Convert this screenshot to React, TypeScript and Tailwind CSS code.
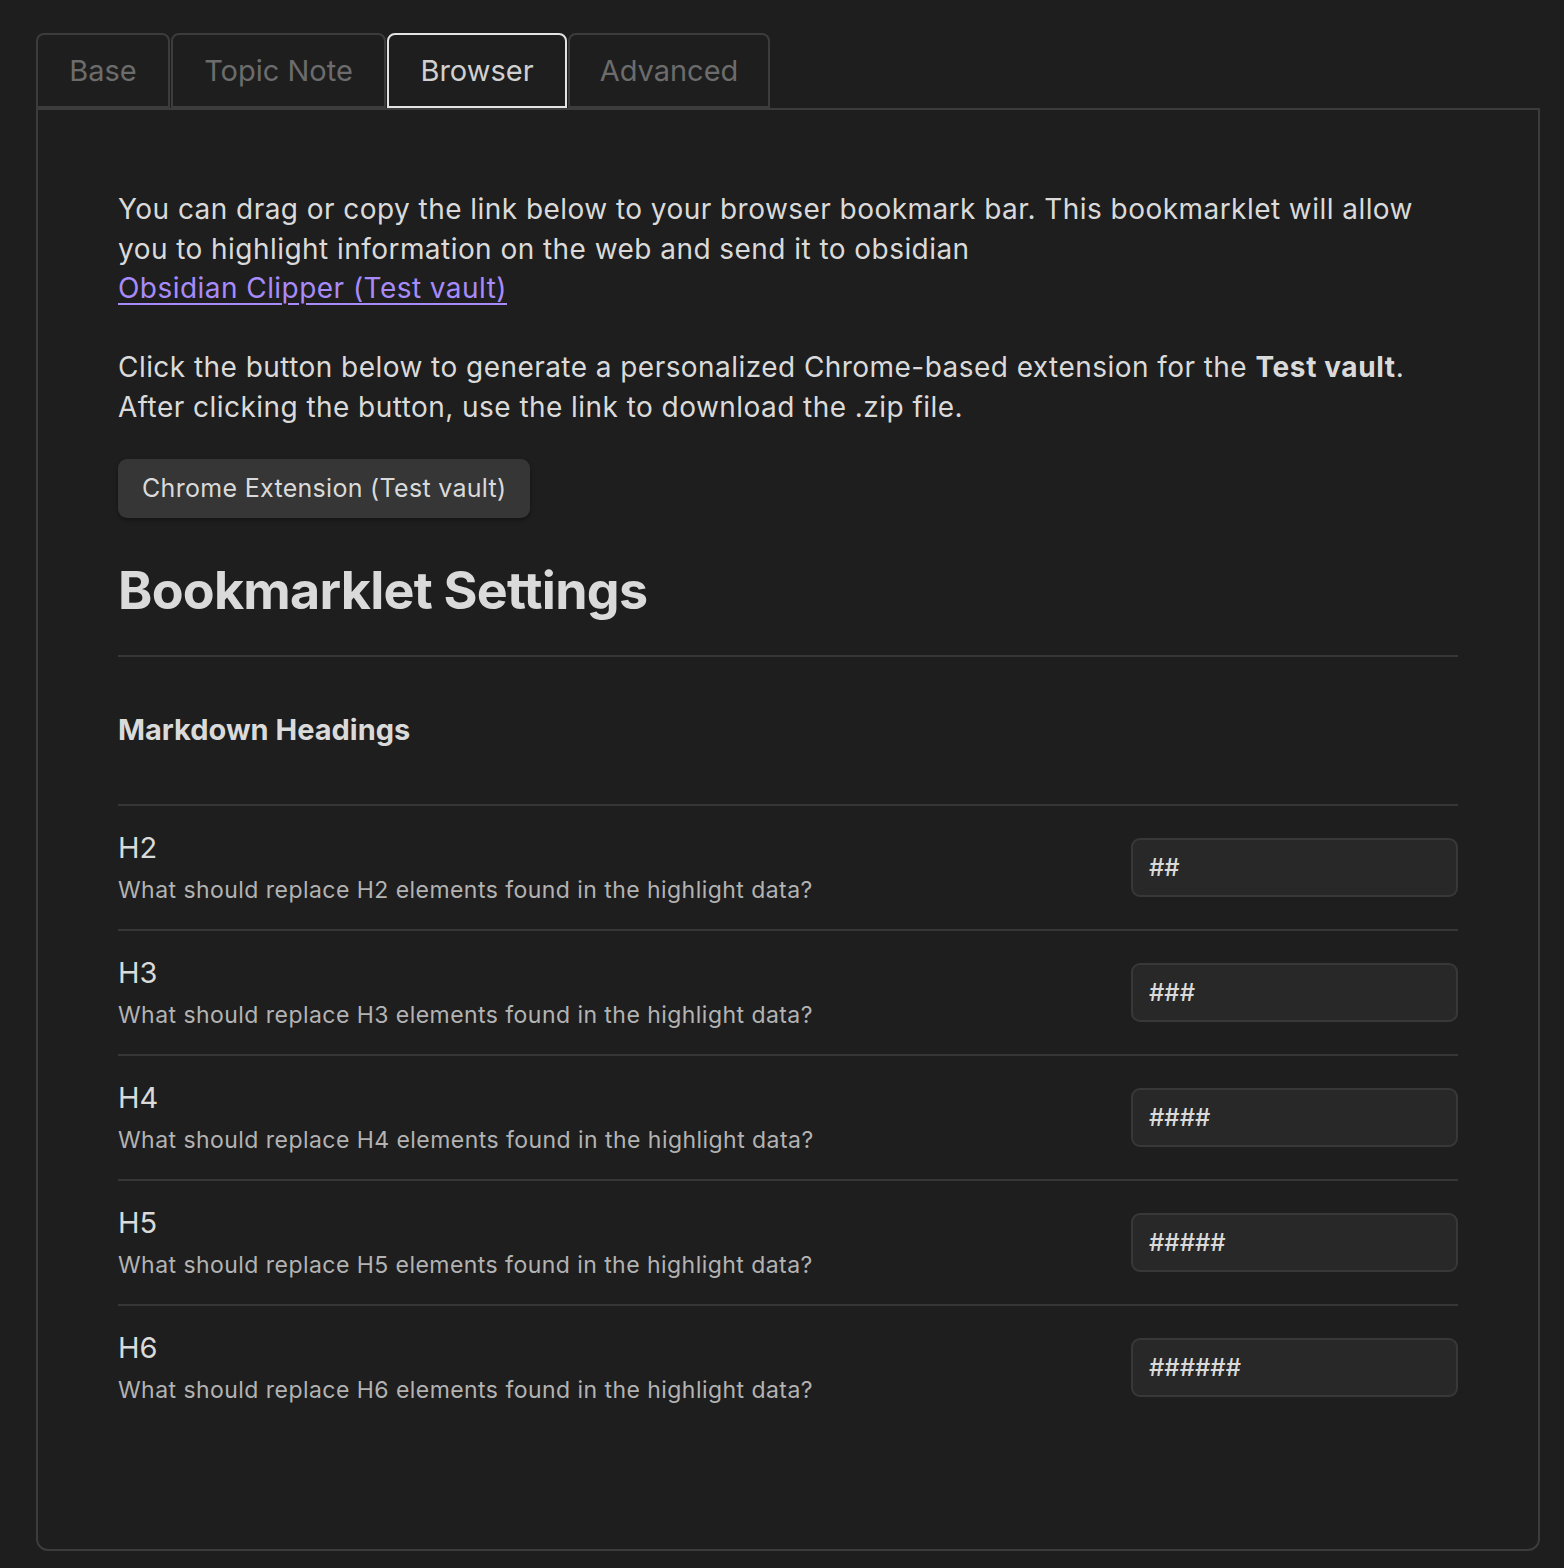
import React from "react";

const TABS = [
  { label: "Base", w: "w-[134px]" },
  { label: "Topic Note", w: "w-[215px]" },
  { label: "Browser", w: "w-[180px]" },
  { label: "Advanced", w: "w-[202px]" },
];
const ACTIVE = "Browser";

const HEADINGS = [
  { name: "H2", value: "##" },
  { name: "H3", value: "###" },
  { name: "H4", value: "####" },
  { name: "H5", value: "#####" },
  { name: "H6", value: "######" },
];

export default function App() {
  return (
    <div
      className="min-h-screen bg-[#1e1e1e] pl-[36px] pt-[33px] pb-[17px] text-[#dadada]"
      style={{ fontFamily: "Inter, 'Noto Sans', 'Liberation Sans', sans-serif" }}
    >
      <div className="w-[1504px]">
        {/* tab strip */}
        <div className="flex items-end gap-px">
          {TABS.map((t) => (
            <div
              key={t.label}
              className={`flex h-[75px] items-center justify-center rounded-t-[8px] border-2 text-[29px] ${t.w} ${
                t.label === ACTIVE
                  ? "border-[#e3e3e3] text-[#d0d0d0]"
                  : "border-[#3c3c3c] text-[#6c6c6c]"
              }`}
            >
              {t.label}
            </div>
          ))}
        </div>

        {/* panel */}
        <div className="rounded-b-[12px] border-2 border-[#3c3c3c] px-[80px] pt-[80px] pb-[120px]">
          <div className="text-[28px] leading-[39.5px] tracking-[0.45px]">
            <p>
              You can drag or copy the link below to your browser bookmark bar. This bookmarklet
              will allow you to highlight information on the web and send it to obsidian
            </p>
            <a href="#" className="text-[#a88bfa] underline underline-offset-[5px] decoration-2">
              Obsidian Clipper (Test vault)
            </a>
            <p className="mt-[39.5px]">
              Click the button below to generate a personalized Chrome-based extension for the{" "}
              <b className="font-bold tracking-[0.6px]">Test vault</b>.
              <br />
              After clicking the button, use the link to download the .zip file.
            </p>
          </div>

          <button className="mt-[32px] h-[59px] rounded-[9px] bg-[#363636] px-[24px] text-[25px] tracking-[0.3px] text-[#dadada] shadow-[0_2px_4px_rgba(0,0,0,0.35)]">
            Chrome Extension (Test vault)
          </button>

          <h1 className="mt-[42px] text-[52px] font-bold leading-[62px] tracking-[-0.75px] text-[#dadada]">
            Bookmarklet Settings
          </h1>
          <div className="mt-[33px] border-t-2 border-[#363636]" />

          <h3 className="mt-[55px] text-[29px] font-bold leading-[36px]">Markdown Headings</h3>

          <div className="mt-[56px]">
            {HEADINGS.map((h) => (
              <div
                key={h.name}
                className="flex h-[125px] items-center justify-between border-t-2 border-[#363636]"
              >
                <div>
                  <div className="text-[29px] leading-[44px]">{h.name}</div>
                  <div className="text-[23px] leading-[40px] tracking-[0.45px] text-[#b3b3b3]">
                    What should replace {h.name} elements found in the highlight data?
                  </div>
                </div>
                <input
                  readOnly
                  value={h.value}
                  className="h-[59px] w-[327px] rounded-[9px] border-2 border-[#383838] bg-[#282828] px-[16px] text-[24px] font-medium text-[#dadada] outline-none"
                />
              </div>
            ))}
          </div>
        </div>
      </div>
    </div>
  );
}
